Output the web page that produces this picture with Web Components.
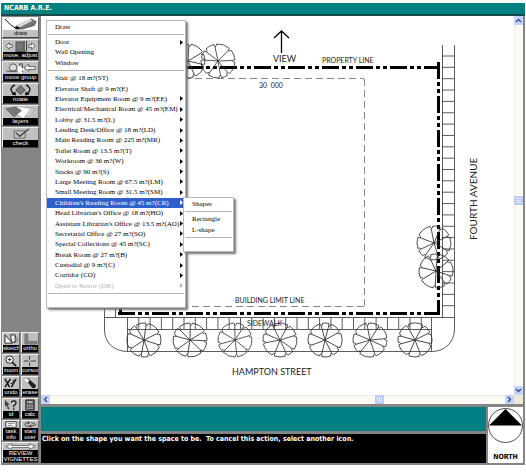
<!DOCTYPE html>
<html lang="en">
<head>
<meta charset="utf-8">
<title>NCARB A.R.E.</title>
<style>
html, body { margin: 0; height: 100%; background: #fff; }
</style>
</head>
<body>
<are-app></are-app>

<template id="t-app">
<style>
:host { display: flex; flex-direction: column; box-sizing: border-box; height: 100vh; padding: 3px 1px 7px; font-family: "Liberation Sans", sans-serif; }
main { flex: 1; min-height: 0; display: flex; background: #858585; padding: 0 2px 2px 0; }
.work { flex: 1; min-width: 0; display: flex; flex-direction: column; gap: 3px; }
.pane { flex: 1; min-height: 0; position: relative; display: grid; grid-template: minmax(0, 1fr) 9px / minmax(0, 1fr) 9px; background: #fff; }
.corner { background: #ece9d8; }
.foot { display: flex; gap: 2px; height: 56px; }
.bars { flex: 1; display: flex; flex-direction: column; gap: 3px; }
.teal { height: 24px; background: #008080; }
menu-panel { position: absolute; }
.main-menu { left: 5px; top: 4px; width: 138px; }
.sub-menu { left: 142px; top: 181px; width: 49px; }
</style>
<title-bar>NCARB A.R.E.</title-bar>
<main>
  <tool-palette></tool-palette>
  <div class="work">
    <div class="pane">
      <site-plan></site-plan>
      <scroll-bar vertical></scroll-bar>
      <scroll-bar></scroll-bar>
      <div class="corner"></div>
      <menu-panel class="main-menu" label="Draw">
        <menu-group>
          <menu-item sub>Door</menu-item>
          <menu-item>Wall Opening</menu-item>
          <menu-item>Window</menu-item>
        </menu-group>
        <menu-group long>
          <menu-item>Stair @ 18 m?(ST)</menu-item>
          <menu-item>Elevator Shaft @ 9 m?(E)</menu-item>
          <menu-item sub>Elevator Equipment Room @ 9 m?(EE)</menu-item>
          <menu-item sub>Electrical/Mechanical Room @ 45 m?(EM)</menu-item>
          <menu-item sub>Lobby @ 31.5 m?(L)</menu-item>
          <menu-item sub>Lending Desk/Office @ 18 m?(LD)</menu-item>
          <menu-item sub>Main Reading Room @ 225 m?(MR)</menu-item>
          <menu-item sub>Toilet Room @ 13.5 m?(T)</menu-item>
          <menu-item sub>Workroom @ 36 m?(W)</menu-item>
          <menu-item sub>Stacks @ 90 m?(S)</menu-item>
          <menu-item sub>Large Meeting Room @ 67.5 m?(LM)</menu-item>
          <menu-item sub>Small Meeting Room @ 31.5 m?(SM)</menu-item>
          <menu-item sub selected>Children's Reading Room @ 45 m?(CR)</menu-item>
          <menu-item sub>Head Librarian's Office @ 18 m?(HO)</menu-item>
          <menu-item sub>Assistant Librarian's Office @ 13.5 m?(AO)</menu-item>
          <menu-item sub>Secretarial Office @ 27 m?(SO)</menu-item>
          <menu-item sub>Special Collections @ 45 m?(SC)</menu-item>
          <menu-item sub>Break Room @ 27 m?(B)</menu-item>
          <menu-item sub>Custodial @ 9 m?(C)</menu-item>
          <menu-item sub>Corridor (CO)</menu-item>
          <menu-item sub disabled>Open to Below (OB)</menu-item>
        </menu-group>
      </menu-panel>
      <menu-panel class="sub-menu" label="Shapes">
        <menu-group short>
          <menu-item>Rectangle</menu-item>
          <menu-item>L-shape</menu-item>
        </menu-group>
      </menu-panel>
    </div>
    <div class="foot">
      <div class="bars">
        <div class="teal"></div>
        <message-bar>Click on the shape you want the space to be.&nbsp; To cancel this action, select another icon.</message-bar>
      </div>
      <north-arrow></north-arrow>
    </div>
  </div>
</main>
</template>

<template id="t-title">
<style>
:host { display: block; height: 11px; background: #008080; border-bottom: 2px solid #174c4c; color: #fff; }
h1 { margin: 0; padding-left: 3px; font: bold 7px/11px "DejaVu Sans Condensed", "Noto Sans", sans-serif; }
</style>
<h1><slot></slot></h1>
</template>

<template id="t-message">
<style>
:host { display: block; flex: 1; background: #000; color: #fff; font: bold 7px/11px "DejaVu Sans Condensed", "Noto Sans", sans-serif; padding-left: 1px; white-space: nowrap; overflow: hidden; }
</style>
<slot></slot>
</template>

<template id="t-north">
<style>
:host { display: flex; flex-direction: column; align-items: center; justify-content: space-between; width: 35px; background: #fff; color: #000; font: bold 7px/11px "DejaVu Sans Condensed", "Noto Sans", sans-serif; }
svg { width: 35px; height: 37px; }
</style>
<svg viewBox="0 0 35 37" aria-hidden="true"><circle cx="17.500" cy="18.500" r="17" fill="none" stroke="#222" stroke-width=".8"/><path d="M17.500 2 34 18.500H1z"/></svg>
<span>NORTH</span>
</template>

<template id="t-scroll">
<style>
:host { display: flex; justify-content: space-between; background: #fbfaf3; box-shadow: inset 0 1px #eeede5; }
:host([vertical]) { flex-direction: column; box-shadow: inset 1px 0 #eeede5; }
button { all: unset; box-sizing: border-box; width: 9px; height: 9px; border-radius: 1px; background: #c4d2fc; display: grid; place-items: center; }
svg { width: 7px; height: 7px; fill: none; stroke: #3b4f86; stroke-width: 1.4; }
.thumb { background: #bccbfa; }
.thumb svg { stroke: #e5ecff; stroke-width: 1; }
:host(:not([vertical])) svg { transform: rotate(-90deg); }
.before { flex: 325; } .after { flex: 121; }
:host([vertical]) .before { flex: 171; } :host([vertical]) .after { flex: 180; }
</style>
<button aria-label="Scroll back"><svg viewBox="0 0 7 7"><path d="M1 5 3.500 2.500 6 5"/></svg></button>
<div class="before"></div>
<button class="thumb" aria-label="Scroll position"><svg viewBox="0 0 7 7"><path d="M1 1.500h5M1 3.500h5M1 5.500h5"/></svg></button>
<div class="after"></div>
<button aria-label="Scroll forward"><svg viewBox="0 0 7 7"><path d="M1 2 3.500 4.500 6 2"/></svg></button>
</template>

<template id="t-panel">
<style>
:host { display: block; background: #fff; border: 1px solid #b9b9b9; box-shadow: 2px 2px 2px #777; font: 7px/10px "Liberation Serif", serif; color: #000; }
header { padding: 1px 8px 2px; line-height: 10px; }
hr { margin: 0 1px; border: 0; border-top: 1px solid #b5b5b0; }
.tail { height: 13px; }
</style>
<header></header><hr><slot></slot><div class="tail"></div>
</template>

<template id="t-group">
<style>
:host { display: block; }
div { display: grid; grid-auto-rows: 1fr; height: 31px; margin: 2px 0; }
:host([long]) div { height: 218px; }
:host([short]) div { height: 21px; }
hr { margin: 0 1px; border: 0; border-top: 1px solid #b5b5b0; }
</style>
<div role="menu"><slot></slot></div><hr>
</template>

<template id="t-item">
<style>
:host { display: block; min-width: 0; min-height: 0; }
button { all: unset; box-sizing: border-box; width: 100%; height: 100%; display: flex; align-items: center; justify-content: space-between; padding: 0 2px 0 8px; white-space: nowrap; }
span { min-width: 0; }
:host([selected]) button { background: #2f5fcb; color: #fff; }
:host([disabled]) button { color: #b4b4a8; }
svg { display: none; flex: none; width: 3px; height: 5px; fill: currentColor; }
:host([sub]) svg { display: block; }
</style>
<button role="menuitem"><span><slot></slot></span><svg viewBox="0 0 3 5"><path d="M0 0 3 2.500 0 5z"/></svg></button>
</template>

<template id="t-tool">
<style>
:host { display: block; min-width: 0; }
button { all: unset; box-sizing: border-box; width: 100%; height: 21px; display: flex; flex-direction: column; background: #c0c0c0; border: 1px solid; border-color: #eee #666 #444 #eee; overflow: hidden; }
.icon { flex: 1; min-height: 0; display: flex; justify-content: center; align-items: center; }
::slotted(svg) { width: 100%; height: 100%; }
.label { background: #000; color: #fff; font: 6px/7px "Liberation Sans", sans-serif; text-align: center; white-space: pre; }
:host([active]) .icon { background: #fff; }
:host([active]) .label { background: #c0c0c0; color: #000; }
:host([two]) .label { line-height: 6px; }
</style>
<button><span class="icon"><slot></slot></span><span class="label"></span></button>
</template>

<template id="t-palette">
<style>
:host { display: flex; flex-direction: column; justify-content: space-between; width: 37px; padding: 1px 2px 0 1px; background: #858585; }
.stack { display: grid; gap: 1px; }
.pair { grid-template-columns: 1fr 1fr; }
.wide { grid-column: 1 / 3; }
</style>
<div class="stack">
  <tool-button label="draw" active><svg viewBox="0 0 36 13"><path d="M1 1Q7 8 14 12" fill="none" stroke="#000"/><path d="M13 9 30 1 35 4 33 8 20 12H14z" fill="#777" stroke="#222" stroke-width=".6"/><path d="M13 9 28 1 31 3 17 10z" fill="#ddd"/><path d="M13 9 17 10 16 12H12z"/></svg></tool-button>
  <tool-button label="move, adjust"><svg viewBox="0 0 36 13"><path d="M2 6.500 6 3V5H9V8H6V10zM34 6.500 30 3V5H27V8H30V10z" fill="#eee" stroke="#333" stroke-width=".7"/><path d="M13 2h8v9h-8z" fill="#777" stroke="#333" stroke-width=".6"/><path d="M22 1v11M24.500 1v11M12 12.300h12" stroke="#333"/></svg></tool-button>
  <tool-button label="move group"><svg viewBox="0 0 36 13"><circle cx="10" cy="6" r="4" fill="#ddd" stroke="#555"/><path d="M3 10h14V2h3v9" fill="none" stroke="#444"/><path d="M15 3 23 9 19 9.500 20 13 15 11z" fill="#fff"/><path d="M22 6 27 2.500V5H34V8H27V10z" fill="#fff" stroke="#333" stroke-width=".8"/></svg></tool-button>
  <tool-button label="rotate"><svg viewBox="0 0 36 13"><path d="M18 1.500 23 6.500 18 11.500 13 6.500z" fill="#777" stroke="#444"/><path d="M12 1Q4 5 11 11M24 1Q32 5 25 11" fill="none" stroke="#111" stroke-width="1.400"/><path d="M8 11 13 12.500 12.500 8zM28 11 23 12.500 23.500 8z"/></svg></tool-button>
  <tool-button label="layers"><svg viewBox="0 0 36 13"><path d="M24 2 34 3 27 12 18 7z" fill="#ccc" stroke="#777" stroke-width=".6" stroke-dasharray="1 1"/><path d="M14 1 28 3 21 13 12 7z" fill="#fff"/><path d="M2 3 13 1 19 5 11 12z" fill="#777" stroke="#555" stroke-width=".6"/></svg></tool-button>
  <tool-button label="check"><svg viewBox="0 0 36 13"><path d="M11 3h12v8H11z" fill="none" stroke="#666"/><path d="M13 5 17 9 27 1" fill="none" stroke="#444" stroke-width="1.500"/></svg></tool-button>
</div>
<div class="stack pair">
  <tool-button label="sketch"><svg viewBox="0 0 17 13"><path d="M2 11V2L10 11z" fill="#fff" stroke="#222"/><path d="M8 2h5v8H9zM13 4l3 3-3 3" fill="#eee" stroke="#222"/></svg></tool-button>
  <tool-button label="ortho"><svg viewBox="0 0 17 13"><path d="M3 1H6V9H16V12H3z" fill="#888" stroke="#555" stroke-width=".7"/></svg></tool-button>
  <tool-button label="zoom"><svg viewBox="0 0 17 13"><circle cx="7" cy="5" r="4" fill="#fff" stroke="#222"/><path d="M5 5h4M7 3v4" stroke="#222"/><path d="M10 8 14 12" stroke="#222" stroke-width="2"/></svg></tool-button>
  <tool-button label="cursor"><svg viewBox="0 0 17 13"><path d="M2 6.500h5M9 6.500h6M8 1v4M8 8v4" stroke="#333"/></svg></tool-button>
  <tool-button label="undo"><svg viewBox="0 0 17 13"><path d="M2 2 7 11M8 2 2 11M14 2 9 11" stroke="#111" stroke-width="1.500"/><path d="M8 7Q12 7 11 3" fill="none" stroke="#111"/></svg></tool-button>
  <tool-button label="erase"><svg viewBox="0 0 17 13"><path d="M3 2 6 1 15 9 14 12 11 12z" fill="#222"/><path d="M2 3 5 1 8 4 6 6z" fill="#fff"/></svg></tool-button>
  <tool-button label="id"><svg viewBox="0 0 17 13"><path d="M2 1 7 6 5 6.500 7 11 5 11 4 7 2 8z" fill="#444"/><path d="M9 4Q9 2 11.500 2T14 4Q14 6 11.500 7V9M11.500 10v2" fill="none" stroke="#111" stroke-width="1.300"/></svg></tool-button>
  <tool-button label="calc"><svg viewBox="0 0 17 13"><path d="M4 1h9v11H4z" fill="#555" stroke="#222"/><path d="M5.500 2.500h6v1.500h-6z" fill="#ddd"/><path d="M5 6.500h7M5 8.500h7M5 10.500h7" stroke="#ddd" stroke-dasharray="1.500 1"/></svg></tool-button>
  <tool-button two label="task&#10;info"><svg viewBox="0 0 17 7"><path d="M3 .500h11v6H3z" fill="#fff" stroke="#333"/><path d="M5 2.500h7M5 4.500h5" stroke="#555" stroke-width=".7"/></svg></tool-button>
  <tool-button two label="start&#10;over"><svg viewBox="0 0 17 7"><path d="M6 1.500Q2 2 3 4T8 5.500 14 4 10 1.500" fill="none" stroke="#444"/><path d="M6 0 9 1.500 6 3.500zM10 3.500 7 5 10 7z" fill="#444"/></svg></tool-button>
  <tool-button class="wide" two label="REVIEW&#10;VIGNETTES"><svg viewBox="0 0 36 7"><path d="M3 3.500 9 .500V2.500H27V.500L33 3.500 27 6.500V4.500H9V6.500z" fill="#fff" stroke="#444" stroke-width=".7"/></svg></tool-button>
</div>
</template>

<template id="t-plan">
<style>
:host { display: block; min-width: 0; min-height: 0; overflow: hidden; }
svg { display: block; width: 100%; height: 100%; }
.thin { fill: none; stroke: #333; stroke-width: .8; }
.limit { fill: none; stroke: #888; stroke-width: 1; stroke-dasharray: 7 4; }
.property { fill: none; stroke: #000; stroke-width: 3; stroke-dasharray: 17 3 4 3 4 3; }
text { font-family: "Lato", sans-serif; fill: #222; }
.small { font-size: 7px; }
.big { font-size: 9px; }
.tall { font-size: 10px; }
</style>
<svg viewBox="41 16 473 379" preserveAspectRatio="xMinYMin meet" role="img" aria-label="Site plan">
<defs><path id="tree"/></defs>
<path class="limit" d="M184 78.500H364"/><path class="limit" d="M364.500 79V306"/><path class="limit" d="M364 306.500H186"/>
<path class="property" d="M186 67.500H439"/>
<path class="property" d="M438.500 62V314"/>
<path class="property" d="M118 313.500H440"/>
<path d="M120.500 308V313" stroke="#000" stroke-width="3"/>
<path class="thin" d="M442.500 45V317.500H104.500M454.500 45V330C454 342 445 351.500 432 351.500H127C113 351 104.500 342 104.500 330V306M115.500 306V318M127.500 318V351M431.500 318V351M127 329.500H432M442 317.500H454"/>
<path class="thin" id="ticks"/>
<g class="thin">
<use href="#tree" transform="translate(188 61) rotate(20)"/><use href="#tree" transform="translate(218 61) rotate(5)"/>
<use href="#tree" transform="translate(434 243) rotate(80)"/><use href="#tree" transform="translate(436 271) rotate(200)"/>
<use href="#tree" transform="translate(144 340) rotate(25)"/><use href="#tree" transform="translate(190 340) rotate(150)"/><use href="#tree" transform="translate(235 340) rotate(90)"/><use href="#tree" transform="translate(280 340) rotate(-10)"/><use href="#tree" transform="translate(325 340) rotate(210)"/><use href="#tree" transform="translate(370 340) rotate(-50)"/><use href="#tree" transform="translate(415 340) rotate(120)"/>
</g>
<path d="M281.500 53V31M274 38 281.500 31 289 38" fill="none" stroke="#000" stroke-width="1.300"/>
<text class="big" x="273" y="62">VIEW</text>
<text class="small" x="322" y="63">PROPERTY LINE</text>
<text class="small" x="259" y="88" xml:space="preserve">30  000</text>
<text class="small" x="235" y="303">BUILDING LIMIT LINE</text>
<text class="small" x="247" y="326">SIDEWALK</text>
<text class="big" x="232" y="375">HAMPTON STREET</text>
<text class="tall" transform="translate(477 240) rotate(-90)">FOURTH AVENUE</text>
</svg>
</template>

<script>
const base = id => class extends HTMLElement {
  constructor() {
    super();
    this.attachShadow({ mode: 'open' }).append(document.getElementById(id).content.cloneNode(true));
  }
};
customElements.define('title-bar', base('t-title'));
customElements.define('message-bar', base('t-message'));
customElements.define('north-arrow', base('t-north'));
customElements.define('scroll-bar', base('t-scroll'));
customElements.define('menu-group', base('t-group'));
customElements.define('menu-item', class extends base('t-item') {
  connectedCallback() { this.shadowRoot.querySelector('button').disabled = this.hasAttribute('disabled'); }
});
customElements.define('menu-panel', class extends base('t-panel') {
  connectedCallback() { this.shadowRoot.querySelector('header').textContent = this.getAttribute('label'); }
});
customElements.define('tool-button', class extends base('t-tool') {
  connectedCallback() { this.shadowRoot.querySelector('.label').textContent = this.getAttribute('label'); }
});
customElements.define('tool-palette', base('t-palette'));

// Tree crown in plan: arcs of a circle with small inward notches, and a branch to each notch.
function treePath() {
  const at = (r, deg) => (r * Math.cos(deg * Math.PI / 180)).toFixed(2) + ' ' + (r * Math.sin(deg * Math.PI / 180)).toFixed(2);
  let d = 'M' + at(17, 0), a = 0, spokes = '';
  for (const len of [52, 30, 46, 58, 34, 40, 56, 44]) {
    d += 'A17 17 0 0 1 ' + at(17, a + len - 9) + 'L' + at(14.5, a + len - 7) + 'Q' + at(14.5, a + len - 1) + ' ' + at(17, a + len);
    a += len;
    spokes += 'M0 0L' + at(14.5, a - 7);
  }
  return d + spokes;
}
customElements.define('site-plan', class extends base('t-plan') {
  connectedCallback() {
    let d = '';
    for (let i = 0; i < 23; i++) d += `M442 ${56 + i * 11.35}H454`;
    for (let i = 1; i < 27; i++) d += `M${127.5 + i * 11.3} 318V329`;
    this.shadowRoot.getElementById('ticks').setAttribute('d', d);
    this.shadowRoot.getElementById('tree').setAttribute('d', treePath());
  }
});
customElements.define('are-app', base('t-app'));
</script>
</body>
</html>
